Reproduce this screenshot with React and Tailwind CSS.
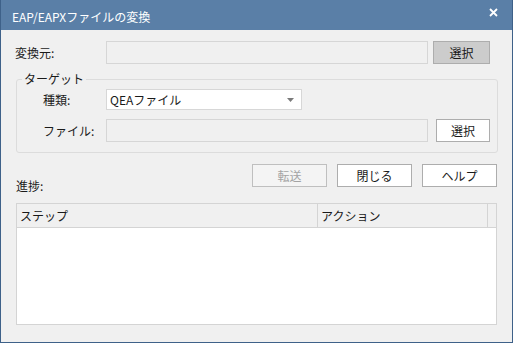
const font = { fontFamily: '"Noto Sans CJK JP", "Noto Sans", sans-serif' };

const Btn = ({ children, className = '' }) => (
  <button
    className={`flex items-center justify-center border text-[12px] leading-none ${className}`}
  >
    {children}
  </button>
);

export default function App() {
  return (
    <div
      className="w-[513px] h-[343px] flex flex-col bg-[#f0f0f0] border-x border-b border-[#3e6189] text-[12px] text-[#1a1a1a] overflow-hidden"
      style={font}
    >
      {/* Title bar */}
      <div className="h-[30px] shrink-0 bg-[#5a7fa7] flex items-center justify-between pl-[11px] pr-[14px] text-white">
        <span className="text-[12px] pt-[4px]">EAP/EAPXファイルの変換</span>
        <svg width="9" height="9" viewBox="0 0 9 9" className="-mt-[6px]">
          <path d="M1 1L8 8M8 1L1 8" stroke="white" strokeWidth="1.8" />
        </svg>
      </div>

      {/* Source row */}
      <div className="flex items-center mt-[11px] pl-[14px]">
        <span className="w-[91px]">変換元:</span>
        <div className="w-[322px] h-[23px] border border-[#d6d6d6] bg-[#f0f0f0]" />
        <Btn className="ml-[5px] w-[57px] h-[23px] bg-[#cccccc] border-[#adadad]">選択</Btn>
      </div>

      {/* Target group */}
      <fieldset className="mt-[8px] ml-[15px] w-[482px] h-[81px] border border-[#dcdcdc] rounded-[3px] px-0 pb-0">
        <legend className="ml-[5px] px-[2px] leading-[14px]">ターゲット</legend>
        <div className="flex items-center mt-[3px]">
          <span className="w-[89px] pl-[26px]">種類:</span>
          <div className="w-[196px] h-[21px] border border-[#d7d7d7] bg-white flex items-center justify-between pl-[3px] pr-[7px]">
            <span className="text-[#1a1a1a]">QEAファイル</span>
            <svg width="7" height="4" viewBox="0 0 7 4">
              <path d="M0 0H7L3.5 4Z" fill="#7a7a7a" />
            </svg>
          </div>
        </div>
        <div className="flex items-center mt-[9px]">
          <span className="w-[89px] pl-[26px]">ファイル:</span>
          <div className="w-[322px] h-[23px] border border-[#d6d6d6] bg-[#f0f0f0]" />
          <Btn className="ml-[8px] w-[54px] h-[23px] bg-white border-[#adadad]">選択</Btn>
        </div>
      </fieldset>

      {/* Action buttons + label */}
      <div className="flex items-end mt-[11px] pl-[15px]">
        <span className="w-[236px] mb-[-8px]">進捗:</span>
        <Btn className="w-[75px] h-[23px] bg-[#f4f4f4] border-[#bfbfbf] text-[#a3a3a3]">転送</Btn>
        <Btn className="ml-[10px] w-[75px] h-[23px] bg-white border-[#adadad]">閉じる</Btn>
        <Btn className="ml-[10px] w-[75px] h-[23px] bg-white border-[#adadad]">ヘルプ</Btn>
      </div>

      {/* Table */}
      <div className="mt-[16px] ml-[15px] w-[481px] h-[122px] border border-[#d4d4d4] bg-white flex flex-col">
        <div className="h-[24px] flex bg-[#f0f0f0] border-b border-[#d4d4d4]">
          <div className="w-[301px] border-r border-[#d4d4d4] flex items-center pl-[3px]">ステップ</div>
          <div className="w-[170px] border-r border-[#d4d4d4] flex items-center pl-[3px]">アクション</div>
          <div className="flex-1" />
        </div>
        <div className="flex-1 bg-white" />
      </div>
    </div>
  );
}
